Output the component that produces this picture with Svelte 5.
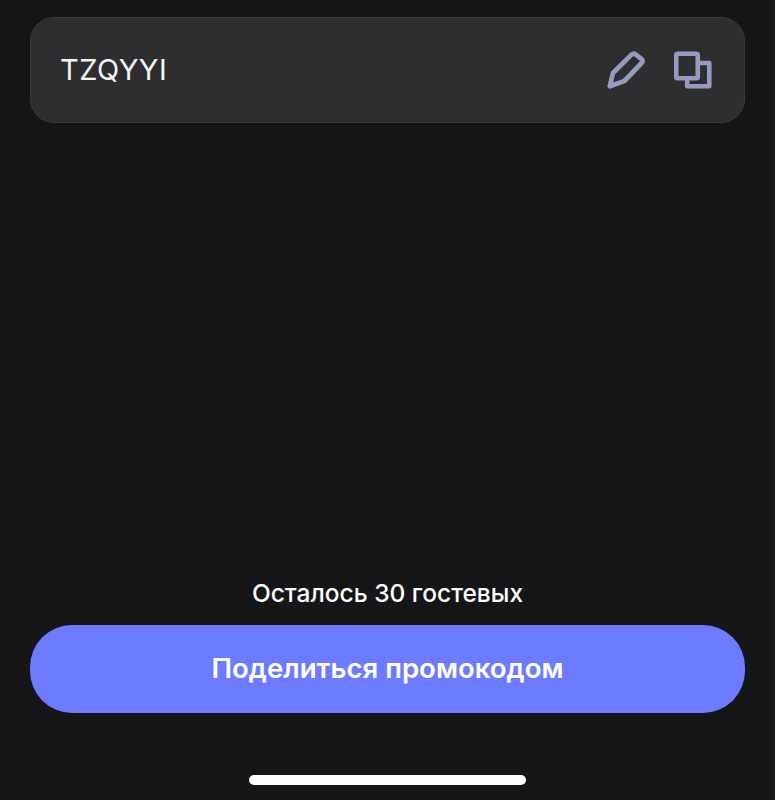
<script>
    let code = 'TZQYYI';
    let left = 30;
</script>

<div class="page">
    <div class="code-card">
        <span class="code">{code}</span>
        <div class="actions">
            <svg class="pencil" width="40" height="40" viewBox="0 0 40 40" fill="none">
                <path d="M3.8 36.2 L7 23 L25.5 4.6 Q27.5 2.8 29.5 4.4 L35.6 9.2 Q37.6 11 35.6 13 L18.4 31 Z" stroke="#959abf" stroke-width="4.8" stroke-linejoin="round" />
            </svg>
            <svg class="copy" width="38" height="38" viewBox="0 0 38 38" fill="none">
                <rect x="2.2" y="2.7" width="21.6" height="24.6" rx="1.5" stroke="#959abf" stroke-width="4.6" />
                <path d="M25 12 H35.3 V35.3 H13.2 V28" stroke="#959abf" stroke-width="4.6" stroke-linejoin="round" />
            </svg>
        </div>
    </div>

    <div class="bottom">
        <div class="left-count">Осталось {left} гостевых</div>
        <button class="share">Поделиться промокодом</button>
        <div class="home-bar"></div>
    </div>
</div>

<style>
    :global(body) {
        margin: 0;
        background-color: #161618;
    }

    .page {
        height: 800px;
        box-sizing: border-box;
        padding: 17px 30px 15px;
        display: flex;
        flex-direction: column;
        justify-content: space-between;
        font-family: Inter, "Liberation Sans", sans-serif;
        color: #ffffff;
    }

    .code-card {
        height: 106px;
        box-sizing: border-box;
        display: flex;
        align-items: center;
        justify-content: space-between;
        padding: 0 32px 2px 29px;
        background-color: #2e2e31;
        border: 1px solid #3a3a3d;
        border-radius: 24px;
    }

    .code {
        font-size: 29px;
        letter-spacing: 0.5px;
        color: #f4f4f4;
    }

    .actions {
        display: flex;
        align-items: center;
        gap: 28px;
        padding-top: 2px;
    }

    .bottom {
        display: flex;
        flex-direction: column;
        align-items: center;
    }

    .left-count {
        font-size: 24.5px;
        font-weight: 500;
        line-height: 30px;
        margin-bottom: 17px;
    }

    .share {
        width: 100%;
        height: 88px;
        padding: 0 0 2px;
        border: none;
        border-radius: 42px;
        background-color: #6c7bff;
        color: #ffffff;
        font-family: inherit;
        font-size: 27.6px;
        font-weight: 600;
    }

    .home-bar {
        width: 277px;
        height: 10px;
        margin-top: 62px;
        border-radius: 5px;
        background-color: #ffffff;
    }
</style>
